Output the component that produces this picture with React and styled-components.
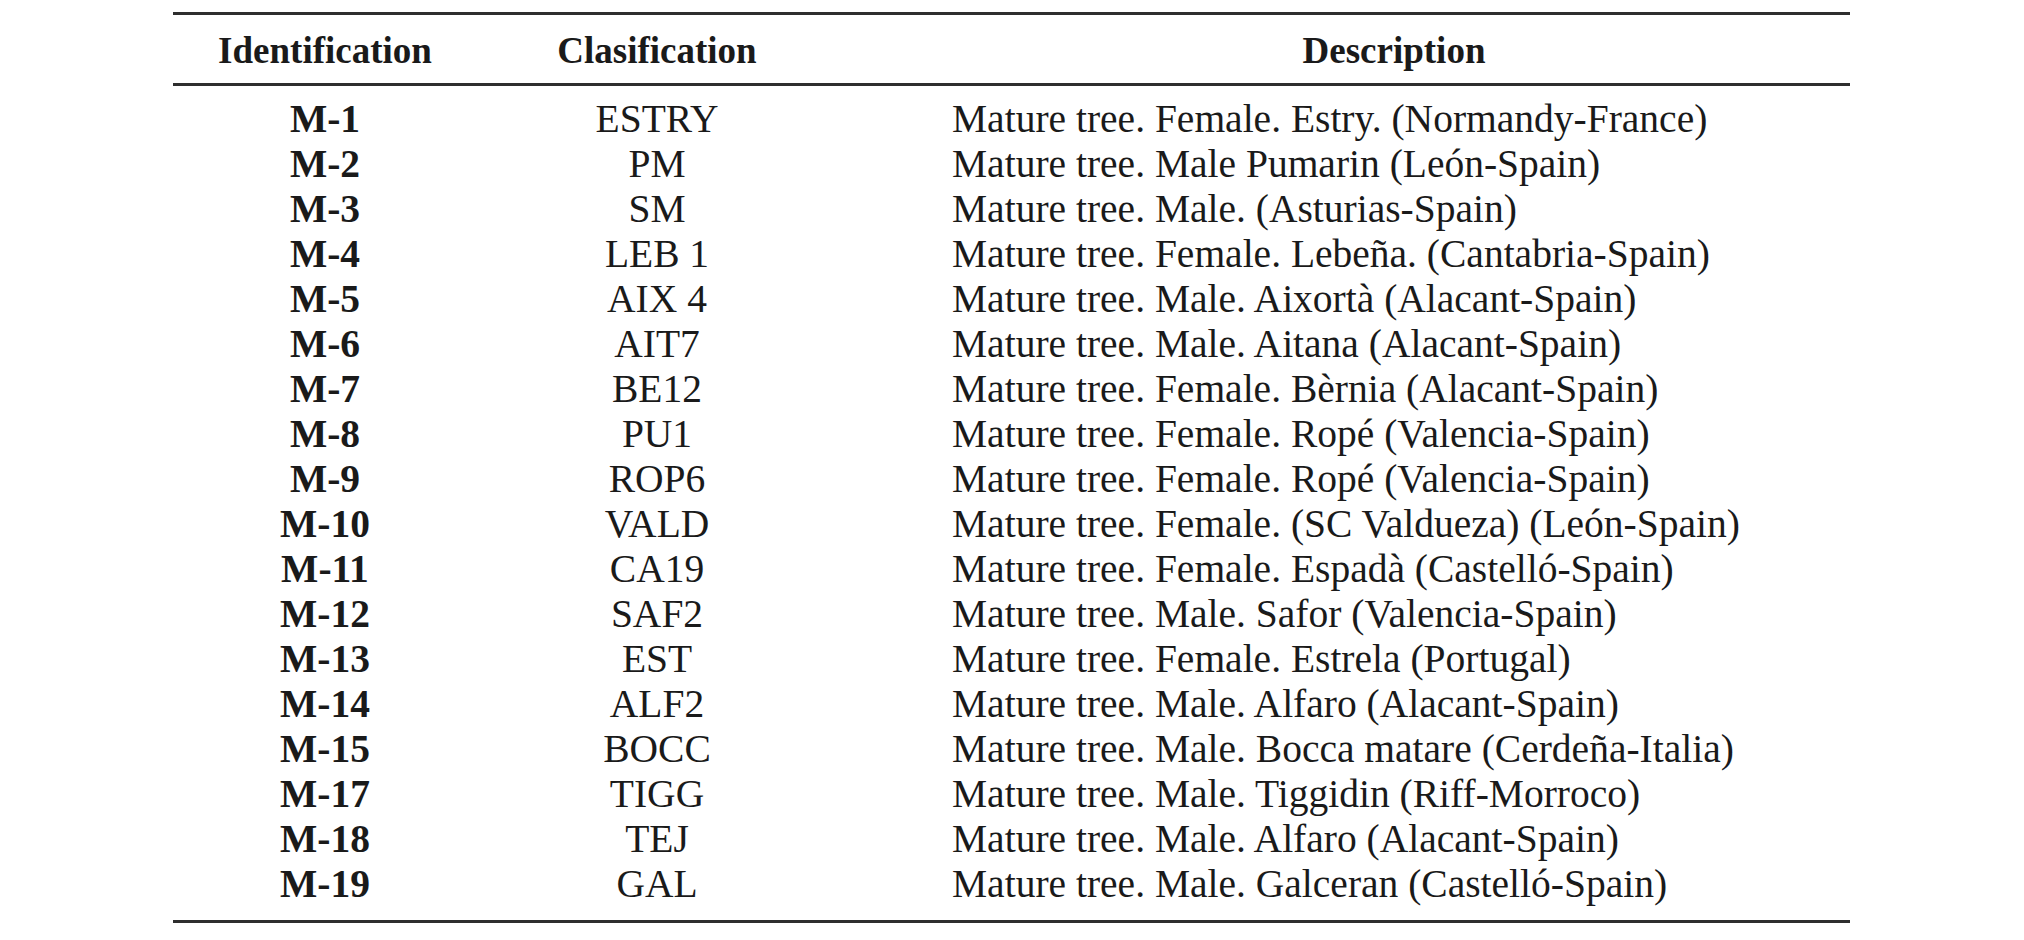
import styled, { createGlobalStyle } from "styled-components";

const GlobalStyle = createGlobalStyle`
  html, body {
    margin: 0;
    padding: 0;
    background: #ffffff;
  }
  body {
    font-family: "Liberation Serif", "Times New Roman", serif;
    color: #1a1a1a;
  }
`;

const rows = [
  ["M-1", "ESTRY", "Mature tree. Female. Estry. (Normandy-France)"],
  ["M-2", "PM", "Mature tree. Male Pumarin (León-Spain)"],
  ["M-3", "SM", "Mature tree. Male. (Asturias-Spain)"],
  ["M-4", "LEB 1", "Mature tree. Female. Lebeña. (Cantabria-Spain)"],
  ["M-5", "AIX 4", "Mature tree. Male. Aixortà (Alacant-Spain)"],
  ["M-6", "AIT7", "Mature tree. Male. Aitana (Alacant-Spain)"],
  ["M-7", "BE12", "Mature tree. Female. Bèrnia (Alacant-Spain)"],
  ["M-8", "PU1", "Mature tree. Female. Ropé (Valencia-Spain)"],
  ["M-9", "ROP6", "Mature tree. Female. Ropé (Valencia-Spain)"],
  ["M-10", "VALD", "Mature tree. Female. (SC Valdueza) (León-Spain)"],
  ["M-11", "CA19", "Mature tree. Female. Espadà (Castelló-Spain)"],
  ["M-12", "SAF2", "Mature tree. Male. Safor (Valencia-Spain)"],
  ["M-13", "EST", "Mature tree. Female. Estrela (Portugal)"],
  ["M-14", "ALF2", "Mature tree. Male. Alfaro (Alacant-Spain)"],
  ["M-15", "BOCC", "Mature tree. Male. Bocca matare (Cerdeña-Italia)"],
  ["M-17", "TIGG", "Mature tree. Male. Tiggidin (Riff-Morroco)"],
  ["M-18", "TEJ", "Mature tree. Male. Alfaro (Alacant-Spain)"],
  ["M-19", "GAL", "Mature tree. Male. Galceran (Castelló-Spain)"]
];

const Page = styled.div`
  padding: 12px 0 0 173px;
`;

const Table = styled.div`
  width: 1677px;
  border-top: 3px solid #2e2e2e;
  border-bottom: 3px solid #2e2e2e;
`;

const HeadRow = styled.div`
  display: grid;
  grid-template-columns: 304px 360px 1fr;
  padding: 15px 0 12px;
  border-bottom: 3px solid #2e2e2e;
  font-size: 37px;
  line-height: 41px;
  font-weight: bold;
`;

const HeadCell = styled.div`
  text-align: center;
  padding-left: ${(p) => p.$indent || 0}px;
  white-space: nowrap;
`;

const Body = styled.div`
  padding: 11px 0 13px;
`;

const Row = styled.div`
  display: grid;
  grid-template-columns: 304px 360px 1fr;
  font-size: 39.5px;
  line-height: 45px;
`;

const Cell = styled.div`
  text-align: ${(p) => (p.$left ? "left" : "center")};
  font-weight: ${(p) => (p.$bold ? "bold" : "normal")};
  padding-left: ${(p) => (p.$left ? 115 : 0)}px;
  white-space: nowrap;
`;

export default function App() {
  return (
    <>
      <GlobalStyle />
      <Page>
        <Table>
          <HeadRow>
            <HeadCell>Identification</HeadCell>
            <HeadCell>Clasification</HeadCell>
            <HeadCell $indent={101}>Description</HeadCell>
          </HeadRow>
          <Body>
            {rows.map(([id, cls, desc]) => (
              <Row key={id}>
                <Cell $bold>{id}</Cell>
                <Cell>{cls}</Cell>
                <Cell $left>{desc}</Cell>
              </Row>
            ))}
          </Body>
        </Table>
      </Page>
    </>
  );
}
